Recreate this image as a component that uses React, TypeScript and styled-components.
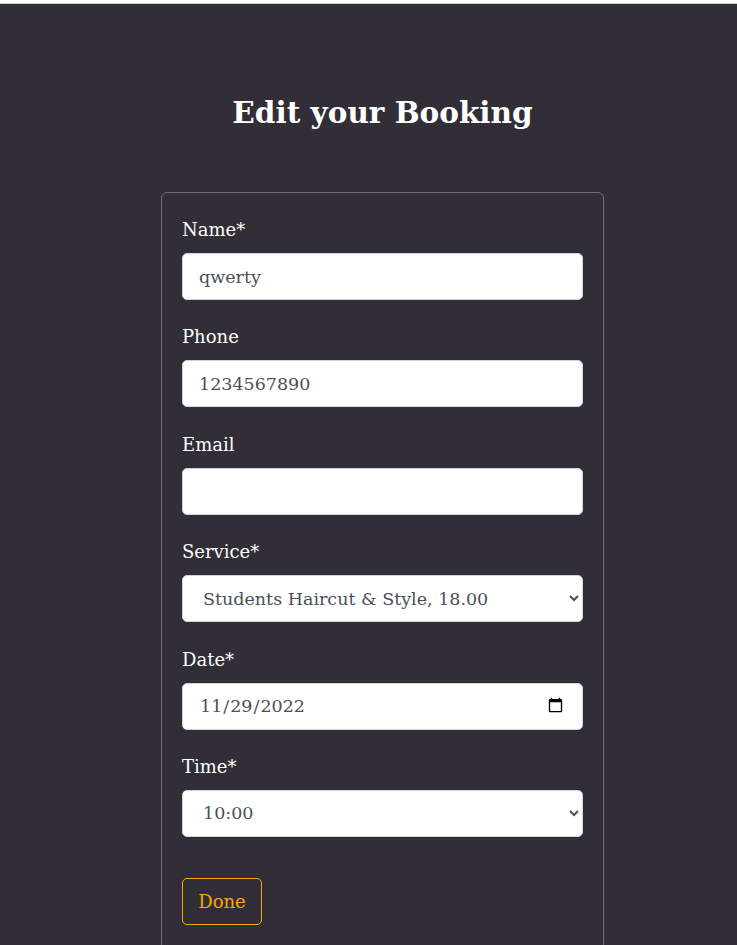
import React from 'react';
import styled, { createGlobalStyle } from 'styled-components';

const GlobalStyle = createGlobalStyle`
  html, body {
    margin: 0;
    padding: 0;
    background: #312e38;
  }
  body {
    font-family: "DejaVu Serif", "Liberation Serif", serif;
    color: #ffffff;
  }
  * {
    box-sizing: border-box;
  }
`;

const TopBar = styled.div`
  height: 4px;
  background: #ffffff;
  border-bottom: 1px solid #d0d0d0;
`;

const Page = styled.main`
  min-height: 941px;
  background: #312e38;
  padding: 85px 0 0 161px;
`;

const Content = styled.div`
  width: 443px;
  display: flex;
  flex-direction: column;
  align-items: center;
`;

const Title = styled.h1`
  margin: 0 0 55px 0;
  font-size: 29.5px;
  font-weight: 700;
  line-height: 48px;
  color: #ffffff;
`;

const Card = styled.form`
  width: 443px;
  border: 1px solid #6e6c74;
  border-radius: 6px;
  padding: 23px 20px 24px 20px;
  display: flex;
  flex-direction: column;
`;

const Field = styled.div`
  display: flex;
  flex-direction: column;
  margin-bottom: 23.4px;
`;

const Label = styled.label`
  font-size: 18px;
  line-height: 27px;
  margin-bottom: 10px;
  color: #ffffff;
`;

const TextInput = styled.input`
  height: 47px;
  width: 100%;
  border: 1px solid #ced4da;
  border-radius: 5px;
  background: #ffffff;
  padding: 0 16px;
  font-family: "DejaVu Serif", "Liberation Serif", serif;
  font-size: 17.5px;
  color: #495057;
  outline: none;
`;

const Select = styled.select`
  height: 47px;
  width: 100%;
  border: 1px solid #ced4da;
  border-radius: 5px;
  background: #ffffff;
  padding: 0 12px 0 16px;
  font-family: "DejaVu Serif", "Liberation Serif", serif;
  font-size: 17.5px;
  color: #495057;
  outline: none;
`;

const DoneButton = styled.button<{ $accent: string }>`
  align-self: flex-start;
  margin-top: 17.6px;
  width: 80px;
  height: 47px;
  border: 1px solid ${p => p.$accent};
  border-radius: 5px;
  background: transparent;
  color: ${p => p.$accent};
  font-family: "DejaVu Serif", "Liberation Serif", serif;
  font-size: 18px;
  cursor: pointer;
`;

const services = [
  'Students Haircut & Style, 18.00',
  'Haircut & Style, 25.00',
  'Beard Trim, 10.00',
];

const times = ['09:00', '10:00', '11:00', '12:00'];

const App: React.FC = () => {
  return (
    <>
      <GlobalStyle />
      <TopBar />
      <Page>
        <Content>
          <Title>Edit your Booking</Title>
          <Card onSubmit={e => e.preventDefault()}>
            <Field>
              <Label htmlFor="name">Name*</Label>
              <TextInput id="name" type="text" defaultValue="qwerty" />
            </Field>
            <Field>
              <Label htmlFor="phone">Phone</Label>
              <TextInput id="phone" type="tel" defaultValue="1234567890" />
            </Field>
            <Field>
              <Label htmlFor="email">Email</Label>
              <TextInput id="email" type="email" defaultValue="" />
            </Field>
            <Field>
              <Label htmlFor="service">Service*</Label>
              <Select id="service" defaultValue={services[0]}>
                {services.map(s => (
                  <option key={s} value={s}>{s}</option>
                ))}
              </Select>
            </Field>
            <Field>
              <Label htmlFor="date">Date*</Label>
              <TextInput id="date" type="date" defaultValue="2022-11-29" />
            </Field>
            <Field>
              <Label htmlFor="time">Time*</Label>
              <Select id="time" defaultValue="10:00">
                {times.map(t => (
                  <option key={t} value={t}>{t}</option>
                ))}
              </Select>
            </Field>
            <DoneButton type="submit" $accent="#ffa500">Done</DoneButton>
          </Card>
        </Content>
      </Page>
    </>
  );
};

export default App;
